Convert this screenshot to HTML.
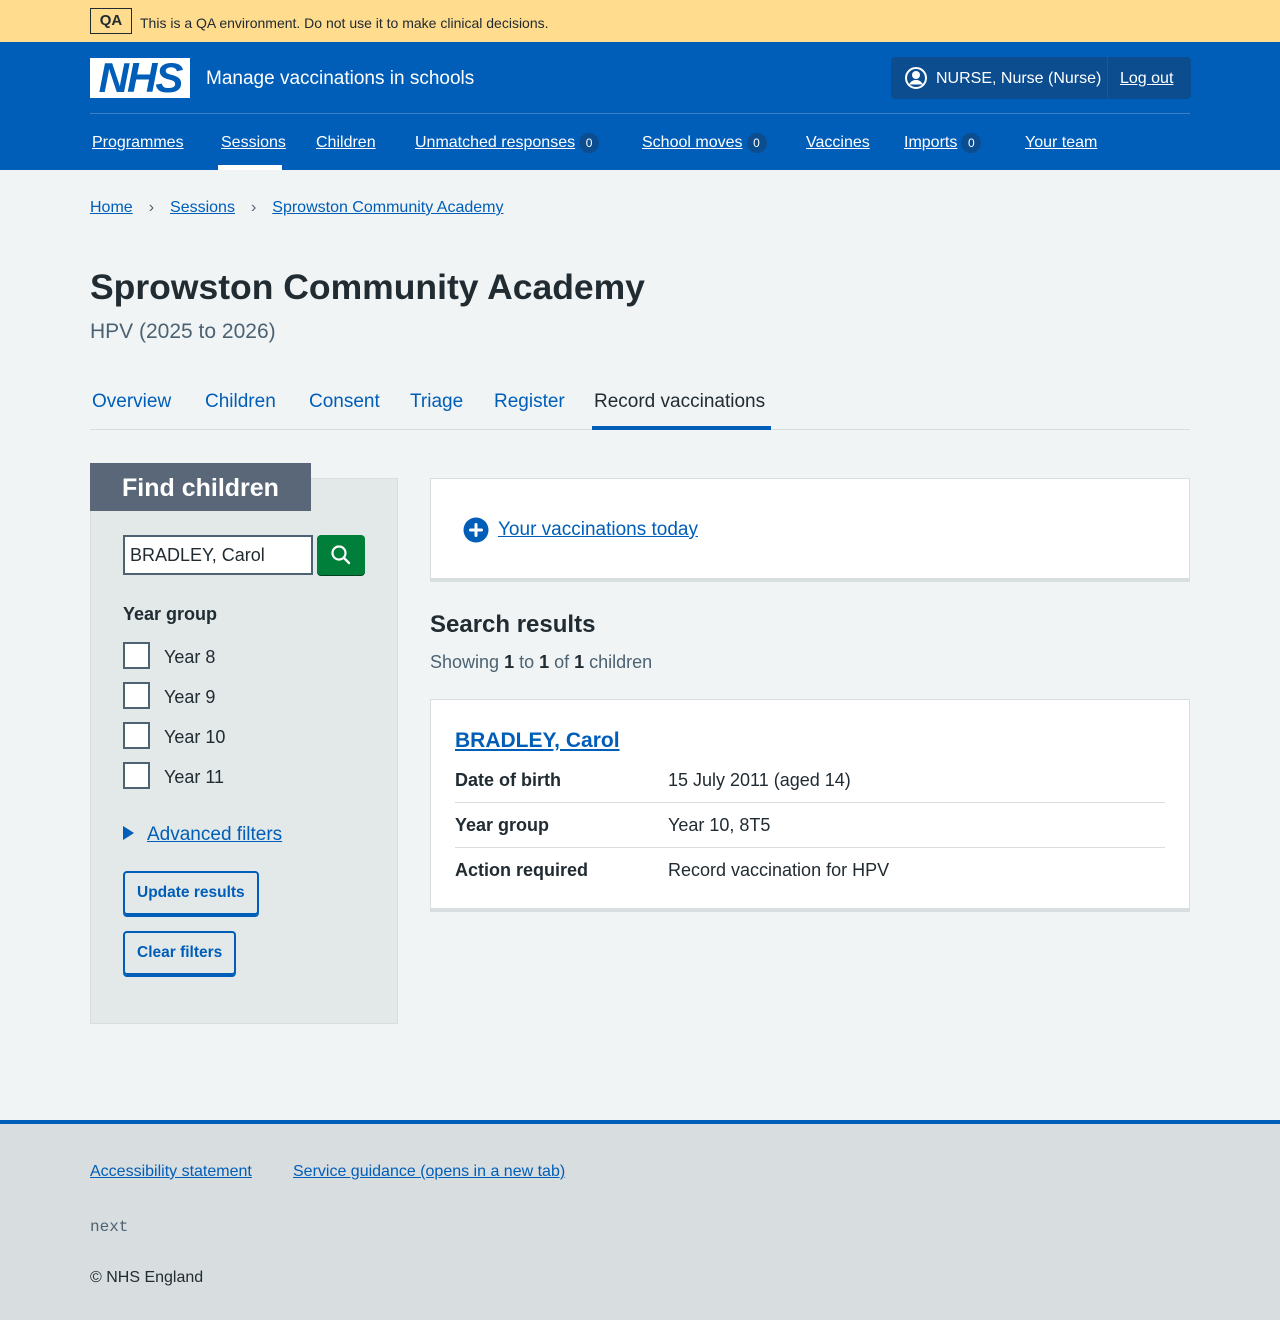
<!DOCTYPE html>
<html><head><meta charset="utf-8">
<style>
*{box-sizing:border-box;margin:0;padding:0}
body{width:1280px;height:1320px;background:#f0f4f5;font-family:"Liberation Sans",Arial,sans-serif;color:#212b32;position:relative;overflow:hidden}
.a{position:absolute;white-space:nowrap}
.t{margin-top:2px}
a{color:#005eb8;text-decoration:underline}
.w a{color:#fff}
.badge{display:inline-block;width:20px;height:20px;border-radius:50%;background:#0b4d8f;color:#fff;font-size:12px;text-align:center;line-height:20px;text-decoration:none;vertical-align:middle;margin-left:4px}
.cb{position:absolute;left:123px;width:27px;height:27px;border:2px solid #4c6272;background:#fff}
.cbl{position:absolute;left:164px;font-size:18px;margin-top:1px}
.btn{position:absolute;left:123px;height:44px;border:2px solid #005eb8;border-radius:4px;box-shadow:0 2px 0 #005eb8;color:#005eb8;font-weight:bold;font-size:15.5px;line-height:40px;padding:0 12px;background:transparent}
.row{position:absolute;left:455px;width:710px;font-size:18px;margin-top:1px}
.row b{position:absolute;left:0}
.row span{position:absolute;left:213px}
</style></head><body>
<div class="a" style="left:0;top:0;width:1280px;height:42px;background:#ffdc8e"></div>
<div class="a" style="left:90px;top:8px;width:42px;height:26px;border:1px solid #212b32;font-size:15px;font-weight:bold;text-align:center;line-height:24px">QA</div>
<div class="a t" style="left:140px;top:13px;font-size:14px">This is a QA environment. Do not use it to make clinical decisions.</div>

<div class="a" style="left:0;top:42px;width:1280px;height:128px;background:#005eb8"></div>
<div class="a" style="left:90px;top:58px;width:100px;height:40px;background:#fff;color:#005eb8;font-weight:bold;font-style:italic;font-size:42px;line-height:40px;text-align:center;letter-spacing:-2px">NHS</div>
<div class="a t" style="left:206px;top:66px;color:#fff;font-size:19px">Manage vaccinations in schools</div>
<div class="a" style="left:891px;top:57px;width:300px;height:42px;background:#0b4d8f;border-radius:4px"></div>
<div class="a" style="left:1107px;top:57px;width:1px;height:42px;background:#005eb8"></div>
<svg class="a" style="left:904px;top:66px" width="24" height="24" viewBox="0 0 24 24"><circle cx="12" cy="12" r="10" fill="none" stroke="#fff" stroke-width="2"/><circle cx="12" cy="9" r="4" fill="#fff"/><path d="M5 18.5c2-3.5 4-4.5 7-4.5s5 1 7 4.5" fill="#fff"/></svg>
<div class="a t" style="left:936px;top:68px;color:#fff;font-size:16px">NURSE, Nurse (Nurse)</div>
<div class="a w t" style="left:1120px;top:68px;font-size:16px"><a>Log out</a></div>
<div class="a" style="left:90px;top:113px;width:1100px;height:1px;background:#3d7fc7"></div>
<div class="a w t" style="left:92px;top:132px;font-size:16px"><a>Programmes</a></div>
<div class="a w t" style="left:221px;top:132px;font-size:16px"><a>Sessions</a></div>
<div class="a" style="left:218px;top:165px;width:64px;height:5px;background:#fff"></div>
<div class="a w t" style="left:316px;top:132px;font-size:16px"><a>Children</a></div>
<div class="a w" style="left:415px;top:133px;font-size:16px"><a>Unmatched responses</a><span class="badge">0</span></div>
<div class="a w" style="left:642px;top:133px;font-size:16px"><a>School moves</a><span class="badge">0</span></div>
<div class="a w t" style="left:806px;top:132px;font-size:16px"><a>Vaccines</a></div>
<div class="a w" style="left:904px;top:133px;font-size:16px"><a>Imports</a><span class="badge">0</span></div>
<div class="a w t" style="left:1025px;top:132px;font-size:16px"><a>Your team</a></div>

<div class="a t" style="left:90px;top:197px;font-size:16px"><a>Home</a><span style="color:#4c6272;margin:0 16px">›</span><a>Sessions</a><span style="color:#4c6272;margin:0 16px">›</span><a>Sprowston Community Academy</a></div>

<div class="a t" style="left:90px;top:265px;font-size:35.5px;font-weight:bold">Sprowston Community Academy</div>
<div class="a t" style="left:90px;top:318px;font-size:21px;color:#4c6272">HPV (2025 to 2026)</div>

<div class="a t" style="left:92px;top:389px;font-size:19px;color:#005eb8">Overview</div>
<div class="a t" style="left:205px;top:389px;font-size:19px;color:#005eb8">Children</div>
<div class="a t" style="left:309px;top:389px;font-size:19px;color:#005eb8">Consent</div>
<div class="a t" style="left:410px;top:389px;font-size:19px;color:#005eb8">Triage</div>
<div class="a t" style="left:494px;top:389px;font-size:19px;color:#005eb8">Register</div>
<div class="a t" style="left:594px;top:389px;font-size:19px">Record vaccinations</div>
<div class="a" style="left:90px;top:429px;width:1100px;height:1px;background:#d8dde0"></div>
<div class="a" style="left:592px;top:426px;width:179px;height:4px;background:#005eb8"></div>

<div class="a" style="left:90px;top:478px;width:308px;height:546px;background:#e3e8e9;border:1px solid #d8dde0"></div>
<div class="a" style="left:90px;top:463px;width:221px;height:48px;background:#5a6778;color:#fff;font-size:25px;font-weight:bold;line-height:50px;padding-left:32px">Find children</div>
<div class="a" style="left:123px;top:535px;width:190px;height:40px;border:2px solid #4c6272;background:#fff;font-size:18px;line-height:36px;padding-left:5px">BRADLEY, Carol</div>
<div class="a" style="left:317px;top:535px;width:48px;height:40px;background:#007f3b;border-radius:4px;box-shadow:0 1px 0 #00401e"></div>
<svg class="a" style="left:329px;top:543px" width="24" height="24" viewBox="0 0 24 24"><circle cx="10" cy="10" r="6.5" fill="none" stroke="#fff" stroke-width="2.2"/><path d="M15 15l5 5" stroke="#fff" stroke-width="2.4" stroke-linecap="round"/></svg>
<div class="a t" style="left:123px;top:602px;font-size:18px;font-weight:bold">Year group</div>
<div class="cb" style="top:642px"></div><div class="cbl" style="top:646px">Year 8</div>
<div class="cb" style="top:682px"></div><div class="cbl" style="top:686px">Year 9</div>
<div class="cb" style="top:722px"></div><div class="cbl" style="top:726px">Year 10</div>
<div class="cb" style="top:762px"></div><div class="cbl" style="top:766px">Year 11</div>
<svg class="a" style="left:123px;top:826px" width="12" height="14"><path d="M0 0L11 7L0 14Z" fill="#005eb8"/></svg>
<div class="a t" style="left:147px;top:822px;font-size:19px"><a>Advanced filters</a></div>
<div class="btn" style="top:871px">Update results</div>
<div class="btn" style="top:931px">Clear filters</div>

<div class="a" style="left:430px;top:478px;width:760px;height:104px;background:#fff;border:1px solid #d8dde0;border-bottom:4px solid #d8dde0"></div>
<svg class="a" style="left:463px;top:517px" width="26" height="26" viewBox="0 0 26 26"><circle cx="13" cy="13" r="12.5" fill="#005eb8"/><path d="M13 7.5v11M7.5 13h11" stroke="#fff" stroke-width="3" stroke-linecap="round"/></svg>
<div class="a t" style="left:498px;top:517px;font-size:19px"><a>Your vaccinations today</a></div>

<div class="a t" style="left:430px;top:609px;font-size:24px;font-weight:bold">Search results</div>
<div class="a t" style="left:430px;top:650px;font-size:18px;color:#4c6272">Showing <b style="color:#212b32">1</b> to <b style="color:#212b32">1</b> of <b style="color:#212b32">1</b> children</div>

<div class="a" style="left:430px;top:699px;width:760px;height:213px;background:#fff;border:1px solid #d8dde0;border-bottom:4px solid #d8dde0"></div>
<div class="a t" style="left:455px;top:727px;font-size:21px;font-weight:bold"><a>BRADLEY, Carol</a></div>
<div class="row" style="top:769px"><b>Date of birth</b><span>15 July 2011 (aged 14)</span></div>
<div class="a" style="left:455px;top:802px;width:710px;height:1px;background:#d8dde0"></div>
<div class="row" style="top:814px"><b>Year group</b><span>Year 10, 8T5</span></div>
<div class="a" style="left:455px;top:847px;width:710px;height:1px;background:#d8dde0"></div>
<div class="row" style="top:859px"><b>Action required</b><span>Record vaccination for HPV</span></div>

<div class="a" style="left:0;top:1120px;width:1280px;height:200px;background:#d8dde0;border-top:4px solid #005eb8"></div>
<div class="a t" style="left:90px;top:1161px;font-size:16px"><a>Accessibility statement</a></div>
<div class="a t" style="left:293px;top:1161px;font-size:16px"><a>Service guidance (opens in a new tab)</a></div>
<div class="a" style="left:90px;top:1218px;font-size:16px;font-family:'Liberation Mono',monospace;color:#4c6272">next</div>
<div class="a t" style="left:90px;top:1267px;font-size:16px">© NHS England</div>
</body></html>
